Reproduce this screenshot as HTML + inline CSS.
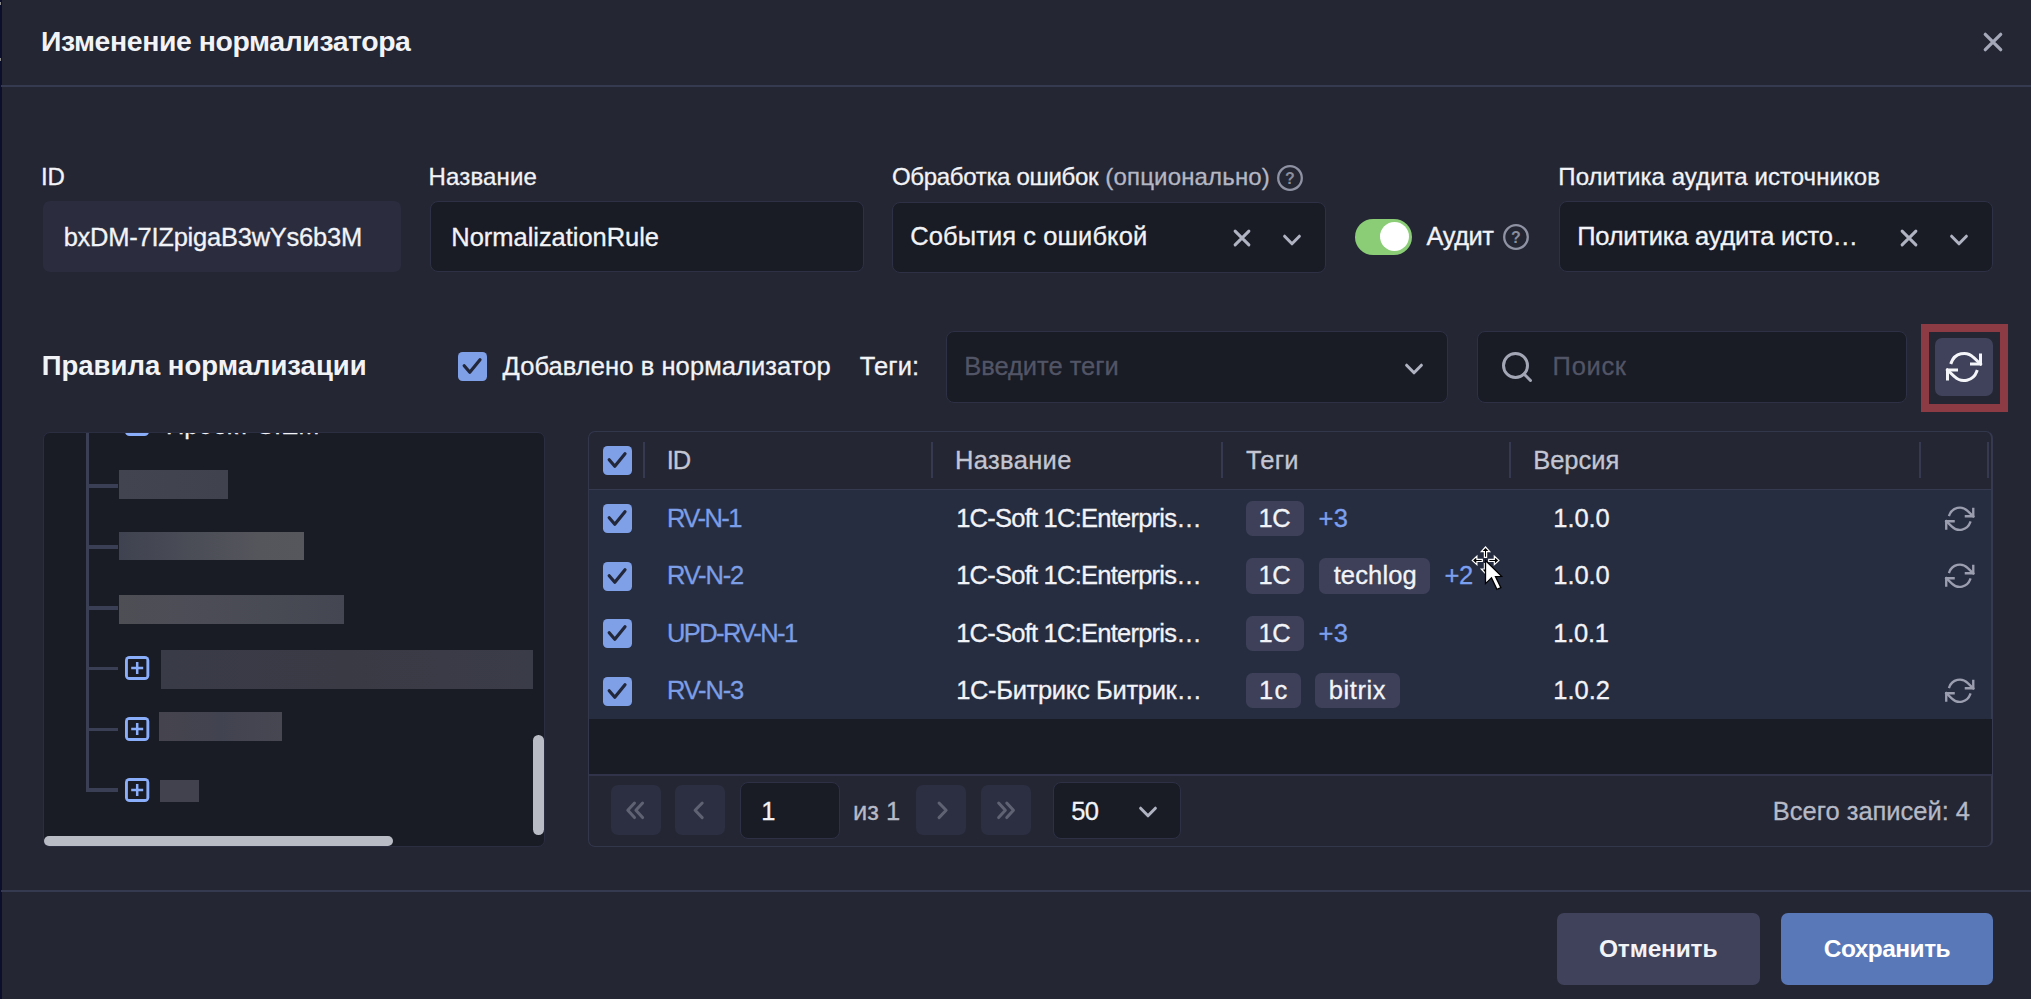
<!DOCTYPE html>
<html lang="ru">
<head>
<meta charset="utf-8">
<title>Изменение нормализатора</title>
<style>
*{box-sizing:border-box;margin:0;padding:0}
html,body{width:2031px;height:999px;overflow:hidden;background:#242633}
body{font-family:"Liberation Sans",sans-serif;position:relative;color:#f2f3f7}
.a{position:absolute}
.t{position:absolute;white-space:nowrap;font-weight:400;-webkit-text-stroke:0.3px currentColor}
.t.m{font-weight:700;-webkit-text-stroke:0}
.hl{position:absolute;left:1px;right:0;height:2px;background:#363a50}
.inp{position:absolute;background:#191b25;border:1.5px solid #2e3145;border-radius:8px}
.dis{position:absolute;background:#2b2d3f;border-radius:7px}
.cb{position:absolute;width:29px;height:29px;border-radius:4.5px;background:#7f9fe6}
.cb svg{position:absolute;left:0;top:0}
.chip{position:absolute;height:35.3px;border-radius:6.5px;background:#3d4058}
.pb{position:absolute;width:50px;height:50px;top:785px;border-radius:7px;background:#2c2f41}
.sep{position:absolute;width:2px;top:442px;height:36px;background:#363a50}
.row{position:absolute;left:589px;width:1402px;height:57px;background:#262d41}
.red{position:absolute}
.br{position:absolute;left:88px;width:30px;height:3.5px;background:#3b3f56}
svg{position:absolute;overflow:visible}
</style>
</head>
<body>
<!-- left edge strip -->
<div class="a" style="left:0;top:0;width:1.5px;height:999px;background:#0b0f2c"></div>
<div class="a" style="left:0;top:2px;width:1px;height:3px;background:#8a8a8a"></div>
<div class="a" style="left:0;top:58px;width:1px;height:3px;background:#8a8a8a"></div>

<!-- header / footer lines -->
<div class="hl" style="top:84.5px"></div>
<div class="hl" style="top:889.7px"></div>

<!-- close X -->
<svg style="left:1981px;top:30px" width="24" height="24" viewBox="0 0 24 24"><path d="M4.3 4.3 L19.7 19.7 M19.7 4.3 L4.3 19.7" stroke="#a5a8b8" stroke-width="3.3" stroke-linecap="round" fill="none"/></svg>

<!-- form row -->
<div class="dis" style="left:42.5px;top:201px;width:358.5px;height:71px"></div>
<div class="inp" style="left:430px;top:201px;width:433.5px;height:71px"></div>
<div class="inp" style="left:892px;top:202px;width:434px;height:70.5px"></div>
<div class="inp" style="left:1559px;top:201px;width:434px;height:71px"></div>

<!-- help icons -->
<svg style="left:1277px;top:165px" width="26" height="26" viewBox="0 0 26 26"><circle cx="13" cy="13" r="11.8" fill="none" stroke="#8f92a2" stroke-width="2.3"/><text x="13" y="19" text-anchor="middle" font-family="Liberation Sans, sans-serif" font-size="16" font-weight="700" fill="#8b8e9e">?</text></svg>
<svg style="left:1503px;top:224px" width="26" height="26" viewBox="0 0 26 26"><circle cx="13" cy="13" r="11.8" fill="none" stroke="#8f92a2" stroke-width="2.3"/><text x="13" y="19" text-anchor="middle" font-family="Liberation Sans, sans-serif" font-size="16" font-weight="700" fill="#8b8e9e">?</text></svg>

<!-- select 1 icons -->
<svg style="left:1230.4px;top:225.7px" width="24" height="24" viewBox="0 0 24 24"><path d="M5.1 5.1 L18.9 18.9 M18.9 5.1 L5.1 18.9" stroke="#b0b3c2" stroke-width="3" stroke-linecap="round" fill="none"/></svg>
<svg style="left:1280.4px;top:227.5px" width="24" height="24" viewBox="0 0 24 24"><path d="M4.6 8.2 L12 15.8 L19.4 8.2" stroke="#b0b3c2" stroke-width="3" stroke-linecap="round" stroke-linejoin="round" fill="none"/></svg>
<!-- select 2 icons -->
<svg style="left:1897.2px;top:225.7px" width="24" height="24" viewBox="0 0 24 24"><path d="M5.1 5.1 L18.9 18.9 M18.9 5.1 L5.1 18.9" stroke="#b0b3c2" stroke-width="3" stroke-linecap="round" fill="none"/></svg>
<svg style="left:1947.2px;top:227.5px" width="24" height="24" viewBox="0 0 24 24"><path d="M4.6 8.2 L12 15.8 L19.4 8.2" stroke="#b0b3c2" stroke-width="3" stroke-linecap="round" stroke-linejoin="round" fill="none"/></svg>

<!-- toggle -->
<div class="a" style="left:1354.6px;top:218.6px;width:57.4px;height:36.5px;border-radius:18.3px;background:#8acd76"></div>
<div class="a" style="left:1379.5px;top:222.2px;width:29.2px;height:29.2px;border-radius:50%;background:#ffffff"></div>

<!-- toolbar row -->
<div class="cb" style="left:458.3px;top:352.2px"><svg width="29" height="29" viewBox="0 0 29 29"><path d="M6.2 13.8 L11.8 20.2 L22 7.8" stroke="#222739" stroke-width="3.2" stroke-linecap="round" stroke-linejoin="round" fill="none"/></svg></div>
<div class="inp" style="left:946px;top:331px;width:502px;height:71.5px"></div>
<svg style="left:1402.2px;top:357px" width="24" height="24" viewBox="0 0 24 24"><path d="M4.6 8.2 L12 15.8 L19.4 8.2" stroke="#b0b3c2" stroke-width="3" stroke-linecap="round" stroke-linejoin="round" fill="none"/></svg>
<div class="inp" style="left:1476.5px;top:331px;width:430px;height:71.5px"></div>
<svg style="left:1499.3px;top:349px" width="36" height="36" viewBox="0 0 24 24"><circle cx="11" cy="11" r="8" fill="none" stroke="#a3a6b5" stroke-width="2"/><path d="M21 21 L16.65 16.65" stroke="#a3a6b5" stroke-width="2" stroke-linecap="round"/></svg>

<!-- red highlight + refresh button -->
<div class="a" style="left:1921px;top:324px;width:87px;height:87.5px;border:8px solid #8c3a44"></div>
<div class="a" style="left:1935.2px;top:338px;width:57.6px;height:58px;border-radius:7px;background:#3f425a"></div>
<svg style="left:1946px;top:348.9px" width="36" height="36" viewBox="0 0 24 24" fill="none" stroke="#f4f5f8" stroke-width="2" stroke-linecap="square" stroke-linejoin="miter"><polyline points="23 4 23 10 17 10"/><polyline points="1 20 1 14 7 14"/><path d="M3.51 9a9 9 0 0 1 14.85-3.36L23 10M1 14l4.64 4.36A9 9 0 0 0 20.49 15"/></svg>

<!-- tree panel -->
<div class="a" style="left:43px;top:431.5px;width:501.5px;height:415px;background:#191b25;border:1.5px solid #2b2e41;border-radius:7px;overflow:hidden">
</div>
<div class="a" style="left:43px;top:433px;width:501px;height:10px;overflow:hidden">
  <div class="a" style="left:82.3px;top:-21px;width:24px;height:24px;border:3px solid #8aaefa;border-radius:4.5px"></div>
  <span class="t" style="left:123px;top:-19.6px;font-size:25.5px;line-height:25.5px;color:#f2f3f7">Проект SIEM</span>
</div>
<!-- tree lines -->
<div class="a" style="left:85.8px;top:433px;width:3.5px;height:359px;background:#3b3f56"></div>
<div class="br" style="top:484px"></div>
<div class="br" style="top:545.2px"></div>
<div class="br" style="top:606.1px"></div>
<div class="br" style="top:666.8px"></div>
<div class="br" style="top:727.5px"></div>
<div class="br" style="top:788.2px"></div>
<!-- redacted boxes -->
<div class="red" style="left:119.2px;top:469.6px;width:108.6px;height:29.7px;background:linear-gradient(90deg,#42454f,#40434d)"></div>
<div class="red" style="left:119.2px;top:532px;width:185.3px;height:28.4px;background:linear-gradient(90deg,#3f4250,#55565c 75%,#56575c)"></div>
<div class="red" style="left:119.2px;top:595.2px;width:224.8px;height:28.7px;background:linear-gradient(90deg,#4e4f55,#4b4c56 40%,#444751)"></div>
<div class="red" style="left:161.1px;top:650px;width:371.9px;height:39.3px;background:linear-gradient(90deg,#393b46,#3a3a45 50%,#3a3c47)"></div>
<div class="red" style="left:158.7px;top:712.2px;width:123.3px;height:28.5px;background:linear-gradient(90deg,#45444e,#424350 50%,#464751)"></div>
<div class="red" style="left:160px;top:780.4px;width:39.4px;height:21.4px;background:#42424e"></div>
<!-- plus icons -->
<svg style="left:125px;top:656px" width="24.3" height="24" viewBox="0 0 24.3 24"><rect x="0" y="0" width="24.3" height="24" rx="4.6" fill="#8aaefa"/><rect x="2.9" y="2.9" width="18.5" height="18.2" rx="0.8" fill="#191b25"/><path d="M6.2 12 H18.2 M12.2 6 V18" stroke="#8aaefa" stroke-width="2.5"/></svg>
<svg style="left:125px;top:716.9px" width="24.3" height="24" viewBox="0 0 24.3 24"><rect x="0" y="0" width="24.3" height="24" rx="4.6" fill="#8aaefa"/><rect x="2.9" y="2.9" width="18.5" height="18.2" rx="0.8" fill="#191b25"/><path d="M6.2 12 H18.2 M12.2 6 V18" stroke="#8aaefa" stroke-width="2.5"/></svg>
<svg style="left:125px;top:777.8px" width="24.3" height="24" viewBox="0 0 24.3 24"><rect x="0" y="0" width="24.3" height="24" rx="4.6" fill="#8aaefa"/><rect x="2.9" y="2.9" width="18.5" height="18.2" rx="0.8" fill="#191b25"/><path d="M6.2 12 H18.2 M12.2 6 V18" stroke="#8aaefa" stroke-width="2.5"/></svg>
<!-- scrollbars -->
<div class="a" style="left:533px;top:735px;width:10.7px;height:100px;border-radius:5.4px;background:#b9bbc5"></div>
<div class="a" style="left:43.8px;top:835.5px;width:349.2px;height:10.7px;border-radius:5.4px;background:#b9bbc5"></div>

<!-- table -->
<div class="a" style="left:588px;top:431px;width:1405px;height:416px;background:#242633;border:1.5px solid #33374c;border-right:2px solid #363a51;border-radius:7px"></div>
<div class="a" style="left:589px;top:488.7px;width:1403px;height:1.5px;background:#363a50"></div>
<div class="row" style="top:490px;height:229.3px"></div>
<div class="a" style="left:589px;top:719px;width:1402.5px;height:55.5px;background:#191b25"></div>
<div class="a" style="left:589px;top:774px;width:1403px;height:1.5px;background:#30334a"></div>
<div class="sep" style="left:643.3px"></div>
<div class="sep" style="left:931.2px"></div>
<div class="sep" style="left:1220.5px"></div>
<div class="sep" style="left:1509.3px"></div>
<div class="sep" style="left:1919.4px"></div>
<div class="sep" style="left:1987.3px"></div>
<!-- checkboxes -->
<div class="cb" style="left:603px;top:445.6px"><svg width="29" height="29" viewBox="0 0 29 29"><path d="M6.2 13.8 L11.8 20.2 L22 7.8" stroke="#222739" stroke-width="3.2" stroke-linecap="round" stroke-linejoin="round" fill="none"/></svg></div>
<div class="cb" style="left:603px;top:504.2px"><svg width="29" height="29" viewBox="0 0 29 29"><path d="M6.2 13.8 L11.8 20.2 L22 7.8" stroke="#222739" stroke-width="3.2" stroke-linecap="round" stroke-linejoin="round" fill="none"/></svg></div>
<div class="cb" style="left:603px;top:561.7px"><svg width="29" height="29" viewBox="0 0 29 29"><path d="M6.2 13.8 L11.8 20.2 L22 7.8" stroke="#222739" stroke-width="3.2" stroke-linecap="round" stroke-linejoin="round" fill="none"/></svg></div>
<div class="cb" style="left:603px;top:619.2px"><svg width="29" height="29" viewBox="0 0 29 29"><path d="M6.2 13.8 L11.8 20.2 L22 7.8" stroke="#222739" stroke-width="3.2" stroke-linecap="round" stroke-linejoin="round" fill="none"/></svg></div>
<div class="cb" style="left:603px;top:676.7px"><svg width="29" height="29" viewBox="0 0 29 29"><path d="M6.2 13.8 L11.8 20.2 L22 7.8" stroke="#222739" stroke-width="3.2" stroke-linecap="round" stroke-linejoin="round" fill="none"/></svg></div>
<!-- chips -->
<div class="chip" style="left:1246.1px;top:500.8px;width:58.3px"></div>
<div class="chip" style="left:1246.1px;top:558.3px;width:58.3px"></div>
<div class="chip" style="left:1319.2px;top:558.3px;width:110.8px"></div>
<div class="chip" style="left:1246.1px;top:615.7px;width:58.3px"></div>
<div class="chip" style="left:1246px;top:673.1px;width:55px"></div>
<div class="chip" style="left:1315.4px;top:673.1px;width:84.8px"></div>
<!-- row refresh icons -->
<svg style="left:1944.8px;top:503.8px" width="29.5" height="29.5" viewBox="0 0 24 24" fill="none" stroke="#9b9eae" stroke-width="1.9" stroke-linecap="square" stroke-linejoin="miter"><polyline points="23 4 23 10 17 10"/><polyline points="1 20 1 14 7 14"/><path d="M3.51 9a9 9 0 0 1 14.85-3.36L23 10M1 14l4.64 4.36A9 9 0 0 0 20.49 15"/></svg>
<svg style="left:1944.8px;top:561.3px" width="29.5" height="29.5" viewBox="0 0 24 24" fill="none" stroke="#9b9eae" stroke-width="1.9" stroke-linecap="square" stroke-linejoin="miter"><polyline points="23 4 23 10 17 10"/><polyline points="1 20 1 14 7 14"/><path d="M3.51 9a9 9 0 0 1 14.85-3.36L23 10M1 14l4.64 4.36A9 9 0 0 0 20.49 15"/></svg>
<svg style="left:1944.8px;top:676.3px" width="29.5" height="29.5" viewBox="0 0 24 24" fill="none" stroke="#9b9eae" stroke-width="1.9" stroke-linecap="square" stroke-linejoin="miter"><polyline points="23 4 23 10 17 10"/><polyline points="1 20 1 14 7 14"/><path d="M3.51 9a9 9 0 0 1 14.85-3.36L23 10M1 14l4.64 4.36A9 9 0 0 0 20.49 15"/></svg>

<!-- pager -->
<div class="pb" style="left:610.5px"></div>
<div class="pb" style="left:675.2px"></div>
<div class="pb" style="left:916.3px"></div>
<div class="pb" style="left:980.9px"></div>
<svg style="left:0;top:0" width="2031" height="999" viewBox="0 0 2031 999" fill="none" stroke="#5f6273" stroke-width="3" stroke-linecap="round" stroke-linejoin="round">
<path d="M634.5 803 L627.8 810.3 L634.5 817.6 M642.6 803 L635.9 810.3 L642.6 817.6"/>
<path d="M702.2 803 L695.1 810.3 L702.2 817.6"/>
<path d="M939.05 803 L946.15 810.3 L939.05 817.6"/>
<path d="M1006.75 803 L1013.45 810.3 L1006.75 817.6 M998.65 803 L1005.35 810.3 L998.65 817.6"/>
</svg>
<div class="inp" style="left:739.5px;top:782px;width:100px;height:56.5px"></div>
<div class="inp" style="left:1052.5px;top:782px;width:128.5px;height:56.5px"></div>
<svg style="left:1136.1px;top:800.2px" width="24" height="24" viewBox="0 0 24 24"><path d="M4.6 8.2 L12 15.8 L19.4 8.2" stroke="#b0b3c2" stroke-width="3" stroke-linecap="round" stroke-linejoin="round" fill="none"/></svg>

<!-- footer buttons -->
<div class="a" style="left:1556.7px;top:913px;width:203.3px;height:71.5px;border-radius:7px;background:#3f425a"></div>
<div class="a" style="left:1781px;top:913px;width:212px;height:71.5px;border-radius:7px;background:#5978b8"></div>

<span id="title" class="t m" style="left:41.00px;top:27.22px;font-size:28.4px;line-height:28.4px;color:#f2f3f7;letter-spacing:-0.400px">Изменение нормализатора</span>
<span id="l_id" class="t" style="left:41.03px;top:165.09px;font-size:24px;line-height:24px;color:#f2f3f7;letter-spacing:-0.272px">ID</span>
<span id="l_name" class="t" style="left:428.41px;top:165.07px;font-size:24px;line-height:24px;color:#f2f3f7;letter-spacing:0.186px">Название</span>
<span id="l_err" class="t" style="left:891.98px;top:165.09px;font-size:24px;line-height:24px;color:#f2f3f7;letter-spacing:-0.320px">Обработка ошибок</span>
<span id="l_opt" class="t" style="left:1105.35px;top:165.07px;font-size:24px;line-height:24px;color:#b4b7c4;letter-spacing:0.164px">(опционально)</span>
<span id="l_pol" class="t" style="left:1558.37px;top:165.09px;font-size:24px;line-height:24px;color:#f2f3f7;letter-spacing:0.048px">Политика аудита источников</span>
<span id="v_id" class="t" style="left:63.67px;top:225.09px;font-size:25.5px;line-height:25.5px;color:#f2f3f7;letter-spacing:-0.239px">bxDM-7IZpigaB3wYs6b3M</span>
<span id="v_name" class="t" style="left:451.35px;top:225.07px;font-size:25.5px;line-height:25.5px;color:#f2f3f7;letter-spacing:-0.039px">NormalizationRule</span>
<span id="v_err" class="t" style="left:910.32px;top:224.11px;font-size:25.5px;line-height:25.5px;color:#f2f3f7;letter-spacing:0.080px">События с ошибкой</span>
<span id="v_aud" class="t" style="left:1426.58px;top:224.13px;font-size:25.5px;line-height:25.5px;color:#f2f3f7;letter-spacing:-0.529px">Аудит</span>
<span id="v_pol" class="t" style="left:1577.26px;top:224.11px;font-size:25.5px;line-height:25.5px;color:#f2f3f7;letter-spacing:-0.240px">Политика аудита исто…</span>
<span id="h_rules" class="t m" style="left:41.77px;top:351.92px;font-size:27.5px;line-height:27.5px;color:#f2f3f7;letter-spacing:-0.002px">Правила нормализации</span>
<span id="c_added" class="t" style="left:502.54px;top:354.09px;font-size:25.5px;line-height:25.5px;color:#f2f3f7;letter-spacing:0.082px">Добавлено в нормализатор</span>
<span id="c_tags" class="t" style="left:859.72px;top:354.09px;font-size:25.5px;line-height:25.5px;color:#f2f3f7;letter-spacing:0.115px">Теги:</span>
<span id="p_tags" class="t" style="left:964.14px;top:354.07px;font-size:25.5px;line-height:25.5px;color:#525565;letter-spacing:-0.008px">Введите теги</span>
<span id="p_search" class="t" style="left:1552.61px;top:354.10px;font-size:25.5px;line-height:25.5px;color:#525565;letter-spacing:0.690px">Поиск</span>
<span id="th_id" class="t" style="left:666.63px;top:448.07px;font-size:25.5px;line-height:25.5px;color:#c3c6d2;letter-spacing:-0.947px">ID</span>
<span id="th_name" class="t" style="left:955.03px;top:448.09px;font-size:25.5px;line-height:25.5px;color:#c3c6d2;letter-spacing:0.347px">Название</span>
<span id="th_tags" class="t" style="left:1246.07px;top:448.07px;font-size:25.5px;line-height:25.5px;color:#c3c6d2;letter-spacing:0.154px">Теги</span>
<span id="th_ver" class="t" style="left:1533.14px;top:448.07px;font-size:25.5px;line-height:25.5px;color:#c3c6d2;letter-spacing:-0.008px">Версия</span>
<span id="r0_id" class="t" style="left:666.89px;top:505.60px;font-size:25.5px;line-height:25.5px;color:#7c9ee6;letter-spacing:-1.506px">RV-N-1</span>
<span id="r0_nm" class="t" style="left:956.15px;top:505.57px;font-size:25.5px;line-height:25.5px;color:#f2f3f7;letter-spacing:-0.757px">1C-Soft 1C:Enterpris…</span>
<span id="r0_ver" class="t" style="left:1553.32px;top:505.57px;font-size:25.5px;line-height:25.5px;color:#f2f3f7;letter-spacing:-0.091px">1.0.0</span>
<span id="r1_id" class="t" style="left:666.89px;top:563.10px;font-size:25.5px;line-height:25.5px;color:#7c9ee6;letter-spacing:-1.168px">RV-N-2</span>
<span id="r1_nm" class="t" style="left:956.15px;top:563.07px;font-size:25.5px;line-height:25.5px;color:#f2f3f7;letter-spacing:-0.757px">1C-Soft 1C:Enterpris…</span>
<span id="r1_ver" class="t" style="left:1553.32px;top:563.07px;font-size:25.5px;line-height:25.5px;color:#f2f3f7;letter-spacing:-0.091px">1.0.0</span>
<span id="r2_id" class="t" style="left:666.99px;top:620.59px;font-size:25.5px;line-height:25.5px;color:#7c9ee6;letter-spacing:-1.588px">UPD-RV-N-1</span>
<span id="r2_nm" class="t" style="left:956.15px;top:620.57px;font-size:25.5px;line-height:25.5px;color:#f2f3f7;letter-spacing:-0.757px">1C-Soft 1C:Enterpris…</span>
<span id="r2_ver" class="t" style="left:1553.32px;top:620.57px;font-size:25.5px;line-height:25.5px;color:#f2f3f7;letter-spacing:-0.260px">1.0.1</span>
<span id="r3_id" class="t" style="left:666.89px;top:678.10px;font-size:25.5px;line-height:25.5px;color:#7c9ee6;letter-spacing:-1.163px">RV-N-3</span>
<span id="r3_nm" class="t" style="left:956.15px;top:678.07px;font-size:25.5px;line-height:25.5px;color:#f2f3f7;letter-spacing:-0.319px">1С-Битрикс Битрик…</span>
<span id="r3_ver" class="t" style="left:1553.32px;top:678.07px;font-size:25.5px;line-height:25.5px;color:#f2f3f7;letter-spacing:0.004px">1.0.2</span>
<span id="t0_1c" class="t" style="left:1258.49px;top:505.59px;font-size:25.5px;line-height:25.5px;color:#f2f3f7;letter-spacing:-0.302px">1C</span>
<span id="t0_p" class="t" style="left:1318.40px;top:505.57px;font-size:25.5px;line-height:25.5px;color:#7ba0f0;letter-spacing:0.534px">+3</span>
<span id="t1_1c" class="t" style="left:1258.49px;top:563.09px;font-size:25.5px;line-height:25.5px;color:#f2f3f7;letter-spacing:-0.302px">1C</span>
<span id="t1_tl" class="t" style="left:1333.65px;top:563.11px;font-size:25.5px;line-height:25.5px;color:#f2f3f7;letter-spacing:0.142px">techlog</span>
<span id="t1_p" class="t" style="left:1444.40px;top:563.07px;font-size:25.5px;line-height:25.5px;color:#7ba0f0;letter-spacing:-0.384px">+2</span>
<span id="t2_1c" class="t" style="left:1258.49px;top:620.59px;font-size:25.5px;line-height:25.5px;color:#f2f3f7;letter-spacing:-0.302px">1C</span>
<span id="t2_p" class="t" style="left:1318.40px;top:620.57px;font-size:25.5px;line-height:25.5px;color:#7ba0f0;letter-spacing:0.534px">+3</span>
<span id="t3_1c" class="t" style="left:1258.89px;top:678.09px;font-size:25.5px;line-height:25.5px;color:#f2f3f7;letter-spacing:1.442px">1c</span>
<span id="t3_bx" class="t" style="left:1328.67px;top:678.09px;font-size:25.5px;line-height:25.5px;color:#f2f3f7;letter-spacing:0.620px">bitrix</span>
<span id="pg_1" class="t" style="left:761.15px;top:798.57px;font-size:25.5px;line-height:25.5px;color:#f2f3f7;letter-spacing:0.000px">1</span>
<span id="pg_of" class="t" style="left:853.04px;top:798.57px;font-size:25.5px;line-height:25.5px;color:#b6b9c6;letter-spacing:-0.054px">из 1</span>
<span id="pg_50" class="t" style="left:1071.22px;top:798.57px;font-size:25.5px;line-height:25.5px;color:#f2f3f7;letter-spacing:-0.615px">50</span>
<span id="pg_tot" class="t" style="left:1772.87px;top:799.12px;font-size:25.5px;line-height:25.5px;color:#b6b9c6;letter-spacing:-0.015px">Всего записей: 4</span>
<span id="b_cancel" class="t m" style="left:1599.00px;top:937.16px;font-size:24.5px;line-height:24.5px;color:#f2f3f7;letter-spacing:-0.184px">Отменить</span>
<span id="b_save" class="t m" style="left:1823.72px;top:937.16px;font-size:24.5px;line-height:24.5px;color:#ffffff;letter-spacing:-0.530px">Сохранить</span>

<!-- mouse cursor -->
<svg style="left:0;top:0" width="2031" height="999" viewBox="0 0 2031 999">
<g stroke="#ffffff" stroke-width="1.2" fill="#000000" stroke-linejoin="miter">
<path d="M1485.5 547 L1481.3 551.6 L1484.4 551.6 L1484.4 557.3 L1486.6 557.3 L1486.6 551.6 L1489.7 551.6 Z"/>
<path d="M1472.3 560.4 L1476.9 556.2 L1476.9 559.3 L1482.3 559.3 L1482.3 561.5 L1476.9 561.5 L1476.9 564.6 Z"/>
<path d="M1498.9 560.4 L1494.3 556.2 L1494.3 559.3 L1488.7 559.3 L1488.7 561.5 L1494.3 561.5 L1494.3 564.6 Z"/>
<path d="M1485.5 573.5 L1481.3 569 L1484.4 569 L1484.4 563.5 L1486.6 563.5 L1486.6 569 L1489.7 569 Z"/>
</g>
<path d="M1485.5 560.5 L1485.5 583.6 L1491.5 577.9 L1496.9 589.4 L1500.9 587.7 L1495.5 576.6 L1501.6 576.4 Z" fill="#ffffff" stroke="#000000" stroke-width="1.3" stroke-linejoin="miter"/>
</svg>
</body>
</html>
